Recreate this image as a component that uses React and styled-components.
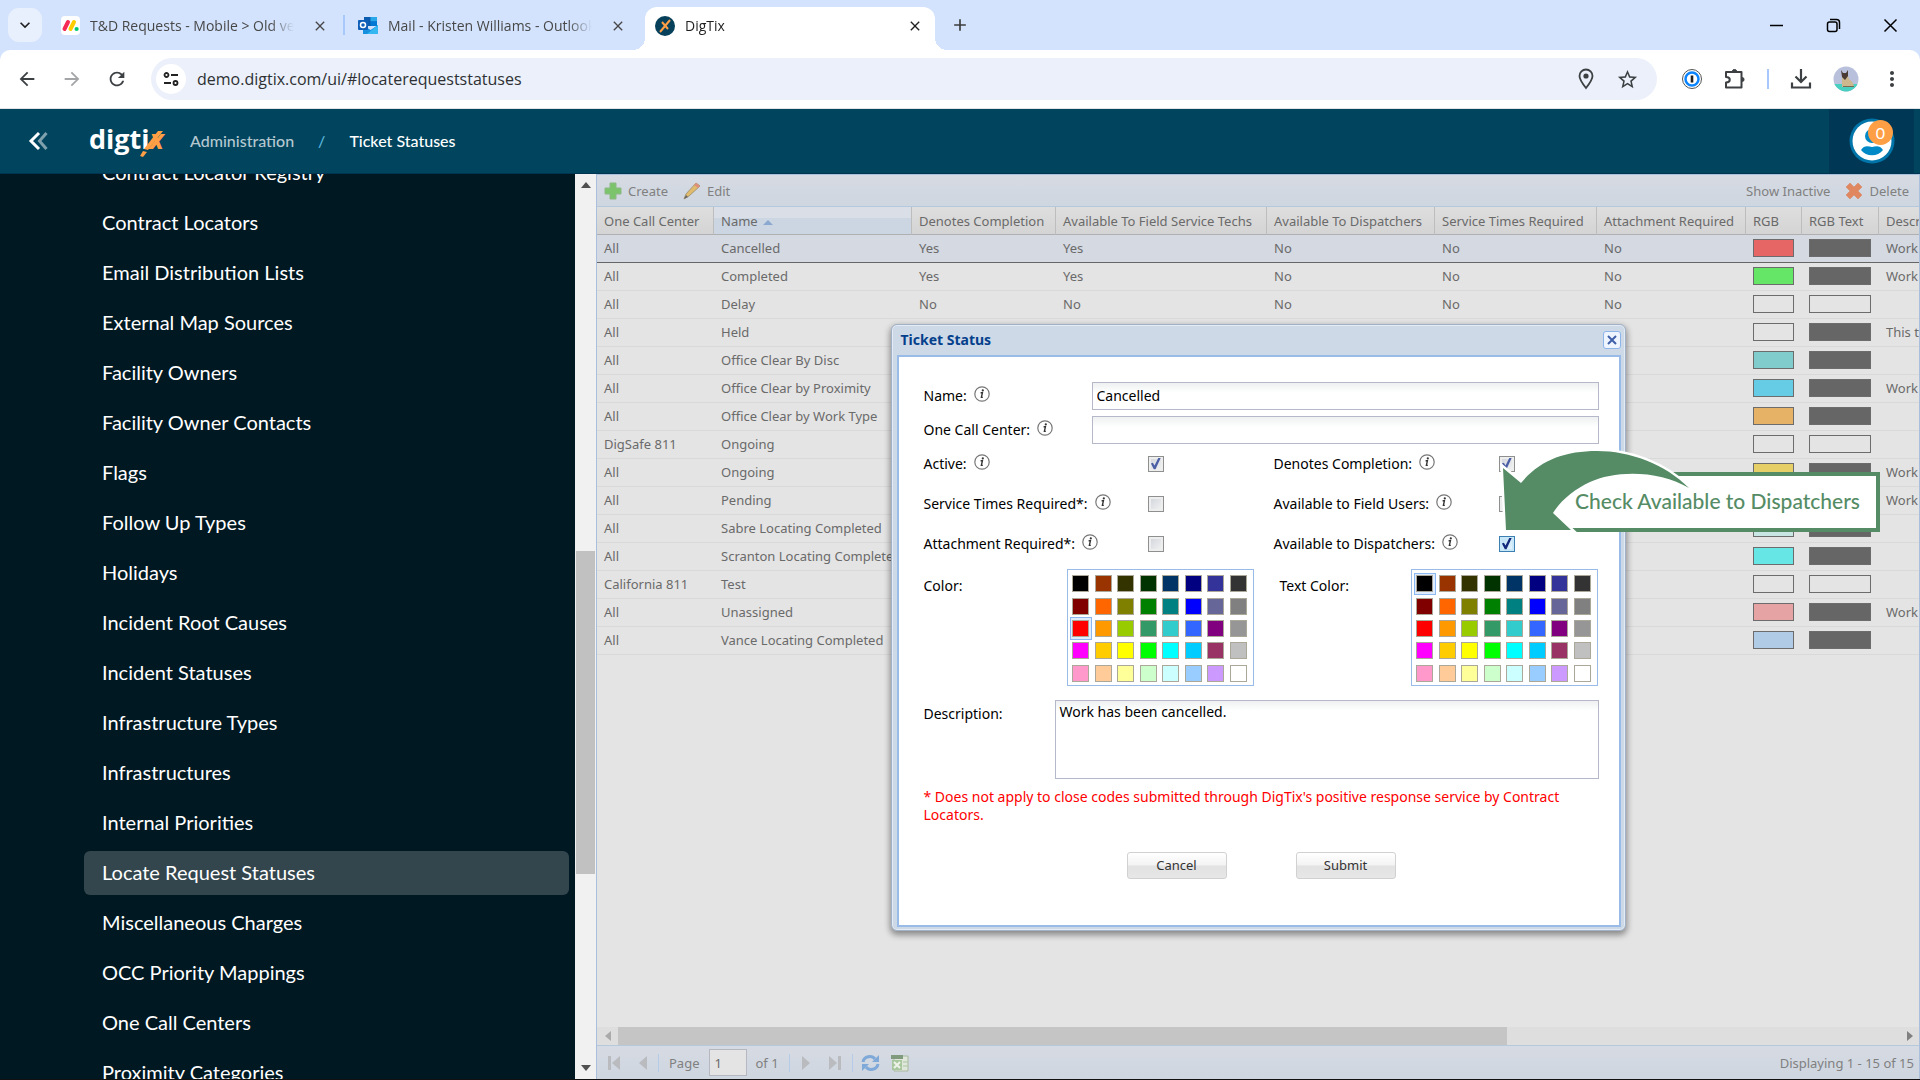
import { useState } from "react";
import styled, { createGlobalStyle } from "styled-components";
import {
  MdArrowBack,
  MdArrowForward,
  MdRefresh,
  MdStarBorder,
  MdMoreVert,
  MdAdd,
  MdClose,
  MdKeyboardArrowDown,
} from "react-icons/md";

const GlobalStyle = createGlobalStyle`
  * { box-sizing: border-box; }
  body {
    margin: 0;
    overflow: hidden;
    font-family: "Noto Sans", sans-serif;
    font-size: 13px;
  }
  button, input, textarea { font: inherit; margin: 0; }
  button { padding: 0; border: 0; background: none; color: inherit; }
  a { color: inherit; text-decoration: none; }
`;

const Page = styled.div`
  display: flex;
  flex-direction: column;
  height: 100vh;
  border-bottom: 1px solid #111;
`;

/* ---------- browser ---------- */

const TabStrip = styled.div`
  display: flex;
  align-items: center;
  height: 50px;
  padding-left: 8px;
  background: #d3e3fd;
  color: #1f1f1f;
  font-family: "Open Sans", sans-serif;
  font-size: 14px;
`;

const TabMenu = styled.button`
  display: flex;
  align-items: center;
  justify-content: center;
  width: 34px;
  height: 34px;
  border-radius: 11px;
  background: #e9f0fd;
  font-size: 20px;
`;

const Tab = styled.div`
  position: relative;
  display: flex;
  align-items: center;
  gap: 10px;
  width: ${(p) => p.$width}px;
  height: 43px;
  margin-top: 7px;
  padding: 0 ${(p) => p.$end}px 6px ${(p) => p.$indent}px;
  color: ${(p) => (p.$active ? "#1f1f1f" : "#474747")};
  background: ${(p) => (p.$active ? "#fff" : "transparent")};
  border-radius: 12px 12px 0 0;

  &::before, &::after {
    content: "";
    display: ${(p) => (p.$active ? "block" : "none")};
    position: absolute;
    bottom: 0;
    width: 12px;
    height: 12px;
  }
  &::before {
    right: 100%;
    background: radial-gradient(circle at 0 0, transparent 12px, #fff 12px);
  }
  &::after {
    left: 100%;
    background: radial-gradient(circle at 100% 0, transparent 12px, #fff 12px);
  }
`;

const TabTitle = styled.span`
  flex: 1;
  margin-right: 4px;
  overflow: hidden;
  white-space: nowrap;
  mask-image: linear-gradient(to right, #000 calc(100% - 24px), transparent);
`;

const TabClose = styled.button`
  display: flex;
  padding: 4px;
  font-size: 16px;
`;

const TabDivider = styled.span`
  width: 2px;
  height: 20px;
  background: #a8c7fa;
`;

const NewTab = styled.button`
  display: flex;
  margin-left: 15px;
  font-size: 20px;
  color: #3c3c3c;
`;

const WindowButtons = styled.div`
  display: flex;
  gap: 42px;
  margin-left: auto;
  padding-right: 22px;

  button { display: flex; }
`;

const AddressRow = styled.div`
  background: #d3e3fd;
`;

const AddressBar = styled.div`
  display: flex;
  align-items: center;
  height: 59px;
  padding: 0 16px;
  background: #fff;
  border-radius: 10px 10px 0 0;
  border-bottom: 1px solid #dfe3e6;
  color: #3c4043;
`;

const NavButton = styled.button`
  display: flex;
  margin-right: 23px;
  font-size: 22px;
  color: ${(p) => (p.$dim ? "#a3a5a7" : "#3c4043")};
`;

const Omnibox = styled.div`
  display: flex;
  align-items: center;
  flex: 1;
  height: 42px;
  padding: 0 18px 0 5px;
  gap: 11px;
  border-radius: 21px;
  background: #ebf0fa;

  button { display: flex; }
`;

const SiteInfo = styled.button`
  align-items: center;
  justify-content: center;
  width: 30px;
  height: 30px;
  border-radius: 50%;
  background: #fff;
`;

const UrlInput = styled.input`
  flex: 1;
  border: 0;
  padding: 0;
  outline: 0;
  background: none;
  color: #2e3033;
  font-family: "Open Sans", sans-serif;
  font-size: 16px;
`;

const PinButton = styled.button`
  margin-right: 9px;
`;

const Extensions = styled.div`
  display: flex;
  align-items: center;
  gap: 21px;
  margin-left: 24px;

  button { display: flex; }
`;

/* ---------- app header ---------- */

const AppHeader = styled.header`
  display: flex;
  align-items: center;
  height: 65px;
  padding: 0 6px 0 28px;
  background: #00445e;
  border-bottom: 1px solid #003450;
  color: #fff;
  font-family: Lato, sans-serif;
  font-size: 16px;
`;

const Collapse = styled.button`
  display: flex;
  margin-right: 41px;
`;

const Logo = styled.a`
  position: relative;
  width: 74px;
  margin-right: 27px;
  padding-bottom: 4px;
  font-family: "Open Sans", sans-serif;
  font-size: 27px;
  font-weight: 700;
  line-height: 36px;
  white-space: nowrap;

  span { color: #ff9f45; font-style: italic; }

  /* long stroke through the x */
  svg { position: absolute; top: 5px; right: 0; }
`;

const Crumbs = styled.nav`
  display: flex;
  gap: 24px;
  padding-bottom: 2px;
  font-weight: 500;
`;

const Crumb = styled.a`
  color: ${(p) => (p.$current ? "#fff" : "#b5c8d0")};
`;

const CrumbSlash = styled.span`
  color: #5cb6dd;
`;

const UserBox = styled.button`
  position: relative;
  display: flex;
  align-items: center;
  justify-content: center;
  width: 85px;
  height: 64px;
  margin-left: auto;
  background: #003755;
`;

const Badge = styled.span`
  position: absolute;
  top: 11px;
  right: 21px;
  width: 25px;
  height: 25px;
  border-radius: 50%;
  background: #ff9f45;
  font-size: 16px;
  line-height: 25px;
  text-align: center;
`;

/* ---------- sidebar ---------- */

const Body = styled.div`
  display: flex;
  flex: 1;
  min-height: 0;
`;

const Sidebar = styled.nav`
  width: 575px;
  flex: none;
  padding: 0 6px 0 84px;
  overflow: hidden;
  background: #001822;
`;

const MenuList = styled.ul`
  display: flex;
  flex-direction: column;
  gap: 6px;
  margin: -23px 0 0;
  padding: 0;
  list-style: none;
`;

const MenuLink = styled.a`
  display: block;
  height: 44px;
  padding-left: 18px;
  border-radius: 6px;
  background: ${(p) => (p.$active ? "#33464e" : "transparent")};
  color: #fff;
  font-family: Lato, sans-serif;
  font-size: 20px;
  line-height: 42px;
`;

const VScroll = styled.div`
  display: flex;
  flex-direction: column;
  align-items: center;
  justify-content: space-between;
  width: 21px;
  flex: none;
  padding: 8px 1px;
  background: #f1f1f1;
`;

const VThumb = styled.div`
  width: 19px;
  height: 323px;
  margin-top: 172px;
  background: #c1c1c1;
`;

const Arrow = styled.span`
  border: 5px solid transparent;
  ${(p) => (p.$dir === "up" ? "border-bottom: 6px solid #505050; border-top: 0;" : "")}
  ${(p) => (p.$dir === "down" ? "border-top: 6px solid #505050; border-bottom: 0;" : "")}
  ${(p) => (p.$dir === "left" ? "border-right: 6px solid #aaa; border-left: 0;" : "")}
  ${(p) => (p.$dir === "right" ? "border-left: 6px solid #808080; border-right: 0;" : "")}
`;

/* ---------- grid ---------- */

const Main = styled.main`
  position: relative;
  display: flex;
  flex-direction: column;
  flex: 1;
  min-width: 0;
  border: 1px solid #a9bfdc;
  border-bottom: 0;
  background: #e4e4e4;
  color: #6a6a6a;
`;

const Toolbar = styled.div`
  display: flex;
  align-items: center;
  height: 32px;
  padding: 0 10px 0 7px;
  background: linear-gradient(#d6dae3, #ced6df);
  border-bottom: 1px solid #b4c8de;
  color: #808080;
`;

const ToolButton = styled.button`
  display: flex;
  align-items: center;
  gap: 6px;
  margin-right: 15px;

  &:last-child { margin-right: 0; }
`;

const Spacer = styled.span`
  flex: 1;
`;

const GridView = styled.div`
  flex: 1;
  overflow: hidden;
`;

const GridTable = styled.table`
  width: 1700px;
  table-layout: fixed;
  border-collapse: separate;
  border-spacing: 0;
`;

const HeadCell = styled.th`
  height: 28px;
  padding: 0 0 0 7px;
  overflow: hidden;
  text-align: left;
  font-weight: 400;
  white-space: nowrap;
  border-right: 1px solid #bdbdbd;
  border-bottom: 1px solid #b0b0b0;
  background: ${(p) =>
    p.$sorted ? "linear-gradient(#d9dee7 40%, #ccd6e3 41%)" : "linear-gradient(#dedede, #d4d4d4)"};
`;

const SortMark = styled.span`
  display: inline-block;
  margin-left: 5px;
  vertical-align: middle;
  border: 5px solid transparent;
  border-top: 0;
  border-bottom: 5px solid #8ba9d0;
`;

const Row = styled.tr`
  background: ${(p) => (p.$selected ? "#d4d9e2" : "#e4e4e4")};

  td { border-bottom: 1px solid ${(p) => (p.$selected ? "#666" : "#d9d9d9")}; }
`;

const Cell = styled.td`
  height: 28px;
  padding: 0 8px 1px 7px;
  overflow: hidden;
  white-space: nowrap;
`;

const Chip = styled.div`
  height: 18px;
  border: 1px solid #6c6c6c;
  background: ${(p) => p.$color || "transparent"};
`;

const HScroll = styled.div`
  display: flex;
  align-items: center;
  height: 18px;
  padding: 0 6px 0 8px;
  background: #dedede;
`;

const HThumb = styled.div`
  width: 68%;
  height: 18px;
  margin: 0 auto 0 7px;
  background: #c5c5c5;
`;

const Pager = styled.div`
  display: flex;
  align-items: center;
  height: 34px;
  padding: 0 5px 0 10px;
  background: linear-gradient(#d6dae3, #ced6df);
  border-top: 1px solid #b4c8de;
  color: #808080;

  button { display: flex; }
`;

const PagerGroup = styled.div`
  display: flex;
  align-items: center;
  gap: ${(p) => p.$gap}px;
  padding: 0 10px 0 ${(p) => p.$start || 8}px;
  border-left: ${(p) => (p.$first ? "0" : "1px solid #b4cbea")};
  height: 18px;
`;

const PageInput = styled.input`
  width: 38px;
  height: 27px;
  padding: 0 5px;
  border: 1px solid #b5b8c0;
  background: #e4e4e4;
  color: #6a6a6a;
`;

/* ---------- dialog ---------- */

const Overlay = styled.div`
  position: absolute;
  inset: 0;
  display: flex;
  align-items: center;
  justify-content: center;
`;

const Dialog = styled.section`
  width: 735px;
  padding: 0 4px 3px 5px;
  border: 1px solid #a2b1c5;
  border-radius: 6px;
  background: #ced9e7;
  box-shadow: 0 3px 6px 1px rgba(0, 0, 0, 0.4), inset 0 0 0 1px #e3ecf6;
  color: #000;
`;

const DialogHead = styled.div`
  display: flex;
  align-items: center;
  justify-content: space-between;
  height: 30px;
  padding: 0 0 0 4px;

  h2 { margin: 0; font-size: 14px; font-weight: 700; color: #04408c; }
`;

const DialogClose = styled.button`
  display: flex;
  align-items: center;
  justify-content: center;
  width: 18px;
  height: 18px;
  border: 1px solid #8fb4e8;
  border-radius: 3px;
  background: #eef5ff;
`;

const Form = styled.form`
  padding: 25px 20px 46px 25px;
  border: 2px solid #99bbe8;
  background: #fff;
  font-size: 14px;
`;

const FieldRow = styled.div`
  display: grid;
  grid-template-columns: 168px 1fr;
  align-items: center;
  margin-bottom: ${(p) => (p.$last ? 0 : 6)}px;
`;

const CheckGrid = styled.div`
  display: grid;
  grid-template-columns: 224px 126px 225px 1fr;
  grid-auto-rows: 40px;
  align-items: center;
`;

const Label = styled.label`
  display: flex;
  align-items: center;
  gap: 7px;

  svg { margin-bottom: 4px; }
`;

const TextInput = styled.input`
  width: 100%;
  height: 28px;
  padding: 0 4px;
  border: 1px solid #b5b8c8;
  background: linear-gradient(#eef0f1, #fff 10px);
`;

const CheckBox = styled.input`
  appearance: none;
  position: relative;
  width: 16px;
  height: 16px;
  border: 1px solid ${(p) => (p.$hot ? "#3c7fb1" : "#8e8f8f")};
  background: ${(p) =>
    p.$hot
      ? "linear-gradient(135deg, #b9dff5, #e8f6fd)"
      : "linear-gradient(135deg, #cfd3da, #f4f4f4)"};
  box-shadow: inset 0 0 0 2px ${(p) => (p.$hot ? "#c8e8f9" : "#eee")};

  &:checked::before {
    content: "";
    position: absolute;
    inset: 1px;
    background: ${(p) => (p.$hot ? "#12297c" : "#4a5fa6")};
    clip-path: polygon(12% 50%, 28% 44%, 42% 66%, 74% 2%, 94% 2%, 50% 98%, 36% 98%);
  }
`;

const ColorRow = styled.div`
  display: grid;
  grid-template-columns: 143px 187px 157px 187px;
  margin-top: 5px;
`;

const PaletteLabel = styled.span`
  padding: 7px 0 0 ${(p) => p.$indent || 0}px;
`;

const Palette = styled.div`
  display: grid;
  grid-template-columns: repeat(8, 1fr);
  grid-template-rows: repeat(5, 1fr);
  width: 187px;
  height: 117px;
  padding: 3px 3px 0 2px;
  border: 1px solid #99bbe8;
`;

const Swatch = styled.button`
  display: flex;
  align-items: center;
  justify-content: center;
  border: 1px solid ${(p) => (p.$on ? "#8bb8f3" : "transparent")};
  background: ${(p) => (p.$on ? "#deecfd" : "transparent")};

  &::before {
    content: "";
    width: 15px;
    height: 15px;
    border: 1px solid #aca899;
    background: ${(p) => p.$color};
  }
`;

const DescRow = styled.div`
  display: grid;
  grid-template-columns: 131px 1fr;
  margin-top: 14px;

  label { padding-top: 4px; }
`;

const TextArea = styled.textarea`
  height: 79px;
  padding: 3px 4px;
  resize: none;
  border: 1px solid #b5b8c8;
  background: linear-gradient(#eef0f1, #fff 10px);
  line-height: 16px;
`;

const Note = styled.p`
  margin: 9px 0 28px;
  color: #f00;
  line-height: 18px;
`;

const Buttons = styled.div`
  display: flex;
  gap: 69px;
  padding-left: 203px;
`;

const FormButton = styled.button`
  width: 100px;
  height: 27px;
  border: 1px solid #d1d1d1;
  border-radius: 3px;
  background: linear-gradient(#fff, #f3f3f3 48%, #e2e2e2 52%, #e7e7e7);
  color: #333;
  font-size: 13px;
`;

/* ---------- callout ---------- */

const Callout = styled.div`
  position: absolute;
  top: 297px;
  right: 39px;
  display: flex;
  align-items: center;
  height: 60px;
  padding: 0 16px 3px 20px;
  border: 4px solid #558c65;
  border-left: 0;
  background: #fff;
  color: #558c65;
  font-family: Lato, sans-serif;
  font-size: 21px;
  font-weight: 500;

  svg { position: absolute; top: -32px; right: 180px; }
  span { position: relative; }
`;

const MENU = [
  "Contract Locator Registry", "Contract Locators", "Email Distribution Lists",
  "External Map Sources", "Facility Owners", "Facility Owner Contacts", "Flags",
  "Follow Up Types", "Holidays", "Incident Root Causes", "Incident Statuses",
  "Infrastructure Types", "Infrastructures", "Internal Priorities",
  "Locate Request Statuses", "Miscellaneous Charges", "OCC Priority Mappings",
  "One Call Centers", "Proximity Categories",
];

const COLUMNS = [
  ["One Call Center", 117], ["Name", 198], ["Denotes Completion", 144],
  ["Available To Field Service Techs", 211], ["Available To Dispatchers", 168],
  ["Service Times Required", 162], ["Attachment Required", 149], ["RGB", 56],
  ["RGB Text", 77], ["Description", 418],
];

const DARK = "#666";

// center, name, completion, field techs, rgb, rgb text, description
const ROWS = [
  ["All", "Cancelled", "Yes", "Yes", "#e66666", DARK, "Work has been cancelled."],
  ["All", "Completed", "Yes", "Yes", "#66e666", DARK, "Work has been completed."],
  ["All", "Delay", "No", "No", "", "", ""],
  ["All", "Held", "No", "No", "", DARK, "This ticket is on hold."],
  ["All", "Office Clear By Disc", "No", "No", "#80cccc", DARK, ""],
  ["All", "Office Clear by Proximity", "No", "No", "#66cce6", DARK, "Work is clear."],
  ["All", "Office Clear by Work Type", "No", "No", "#e6b366", DARK, ""],
  ["DigSafe 811", "Ongoing", "No", "No", "", "", ""],
  ["All", "Ongoing", "No", "No", "#e6cf66", DARK, "Work is ongoing."],
  ["All", "Pending", "No", "No", "#e6e6b3", DARK, "Work is pending."],
  ["All", "Sabre Locating Completed", "No", "No", "#c8e6e3", DARK, ""],
  ["All", "Scranton Locating Completed", "No", "No", "#66e6e4", DARK, ""],
  ["California 811", "Test", "No", "No", "", "", ""],
  ["All", "Unassigned", "No", "No", "#e6a3a3", DARK, "Work is unassigned."],
  ["All", "Vance Locating Completed", "No", "No", "#b0cbe6", DARK, ""],
];

const COLORS = [
  "#000000", "#993300", "#333300", "#003300", "#003366", "#000080", "#333399", "#333333",
  "#800000", "#ff6600", "#808000", "#008000", "#008080", "#0000ff", "#666699", "#808080",
  "#ff0000", "#ff9900", "#99cc00", "#339966", "#33cccc", "#3366ff", "#800080", "#969696",
  "#ff00ff", "#ffcc00", "#ffff00", "#00ff00", "#00ffff", "#00ccff", "#993366", "#c0c0c0",
  "#ff99cc", "#ffcc99", "#ffff99", "#ccffcc", "#ccffff", "#99ccff", "#cc99ff", "#ffffff",
];

const CHECKS = [
  ["active", "Active:", true],
  ["completion", "Denotes Completion:", true],
  ["times", "Service Times Required*:", false],
  ["field", "Available to Field Users:", false],
  ["attachment", "Attachment Required*:", false],
  ["dispatchers", "Available to Dispatchers:", true],
];

function InfoIcon() {
  return (
    <svg width="16" height="16" viewBox="0 0 16 16" fill="none">
      <circle cx="8" cy="8" r="7.2" stroke="#777" strokeWidth="1.2" />
      <circle cx="8.8" cy="4.4" r="1.1" fill="#333" />
      <path d="M6.6 6.8h1.8l-1 4.6h1.4" stroke="#333" strokeWidth="1.4" />
    </svg>
  );
}

function MondayIcon() {
  return (
    <svg width="19" height="19" viewBox="0 0 19 19">
      <rect width="19" height="19" rx="4" fill="#fff" />
      <g strokeWidth="4" strokeLinecap="round">
        <path d="M3.5 13 7 6" stroke="#f62b54" />
        <path d="M9.5 13 13 6" stroke="#fc0" />
      </g>
      <circle cx="15.6" cy="13" r="2.1" fill="#00ca72" />
    </svg>
  );
}

function OutlookIcon() {
  return (
    <svg width="20" height="19" viewBox="0 0 20 19">
      <path d="M6 1h13v9H6z" fill="#0a5cb0" />
      <path d="M12.500 1H19v4.500h-6.500z" fill="#28a8ea" />
      <path d="M12.500 5.500H19V10h-6.500z" fill="#0078d4" />
      <path d="M5 9l7.500 5L20 9v9H5z" fill="#1490df" />
      <path d="M20 9v9H9z" fill="#35b8f1" />
      <rect y="4" width="10" height="10" rx="1" fill="#0f5fb8" />
      <circle cx="5" cy="9" r="2.500" fill="none" stroke="#fff" strokeWidth="1.500" />
    </svg>
  );
}

function DigTixIcon() {
  return (
    <svg width="20" height="20" viewBox="0 0 20 20">
      <circle cx="10" cy="10" r="10" fill="#06405a" />
      <path d="M5 16 15 4" stroke="#ff9f45" strokeWidth="2" />
      <path d="M7 6l6 7" stroke="#ff9f45" strokeWidth="2" />
    </svg>
  );
}

function Browser() {
  return (
    <>
      <TabStrip>
        <TabMenu aria-label="Search tabs"><MdKeyboardArrowDown /></TabMenu>
        <Tab $width={301} $indent={19} $end={11}>
          <MondayIcon />
          <TabTitle>T&amp;D Requests - Mobile &gt; Old version</TabTitle>
          <TabClose aria-label="Close tab"><MdClose /></TabClose>
        </Tab>
        <TabDivider />
        <Tab $width={300} $indent={13} $end={15}>
          <OutlookIcon />
          <TabTitle>Mail - Kristen Williams - Outlook</TabTitle>
          <TabClose aria-label="Close tab"><MdClose /></TabClose>
        </Tab>
        <Tab $width={290} $indent={10} $end={8} $active>
          <DigTixIcon />
          <TabTitle>DigTix</TabTitle>
          <TabClose aria-label="Close tab"><MdClose /></TabClose>
        </Tab>
        <NewTab aria-label="New tab"><MdAdd /></NewTab>
        <WindowButtons>
          <button aria-label="Minimize">
            <svg width="15" height="15"><path d="M1 7.500h13" stroke="#000" strokeWidth="1.500" /></svg>
          </button>
          <button aria-label="Restore">
            <svg width="15" height="15" fill="none" stroke="#000" strokeWidth="1.500">
              <rect x="1.500" y="4" width="9.500" height="9.500" rx="2" />
              <path d="M4 1.500h6.500a3 3 0 0 1 3 3V11" />
            </svg>
          </button>
          <button aria-label="Close">
            <svg width="15" height="15"><path d="m1.500 1.500 12 12m0-12-12 12" stroke="#000" strokeWidth="1.500" /></svg>
          </button>
        </WindowButtons>
      </TabStrip>
      <AddressRow>
        <AddressBar>
          <NavButton aria-label="Back"><MdArrowBack /></NavButton>
          <NavButton aria-label="Forward" $dim><MdArrowForward /></NavButton>
          <NavButton aria-label="Reload"><MdRefresh /></NavButton>
          <Omnibox>
            <SiteInfo aria-label="Site information">
              <svg width="16" height="16" fill="none" stroke="#222" strokeWidth="1.800">
                <circle cx="3.500" cy="4" r="2" />
                <path d="M8 4h7M1 12h7" />
                <circle cx="12.500" cy="12" r="2" />
              </svg>
            </SiteInfo>
            <UrlInput aria-label="Address" defaultValue="demo.digtix.com/ui/#locaterequeststatuses" />
            <PinButton aria-label="Location">
              <svg width="20" height="22" viewBox="0 0 20 22" fill="none">
                <path d="M10 20C6 15 3.500 11.500 3.500 8a6.500 6.500 0 0 1 13 0c0 3.500-2.500 7-6.500 12z" stroke="#3c4043" strokeWidth="1.800" />
                <circle cx="10" cy="8" r="2.600" fill="#3c4043" />
              </svg>
            </PinButton>
            <button aria-label="Bookmark"><MdStarBorder size={23} /></button>
          </Omnibox>
          <Extensions>
            <button aria-label="Password manager">
              <svg width="22" height="22" viewBox="0 0 22 22">
                <circle cx="11" cy="11" r="9.500" fill="#fff" stroke="#555" />
                <circle cx="11" cy="11" r="6.500" fill="#fff" stroke="#0a84ff" strokeWidth="2.500" />
                <path d="M11 7.500v7" stroke="#1f1f1f" strokeWidth="2.600" />
              </svg>
            </button>
            <button aria-label="Extensions">
              <svg width="22" height="22" viewBox="0 0 22 22" fill="none" stroke="#3c4043" strokeWidth="2">
                <path d="M2 4h15.500v15.500H2v-5c5 0 5-5.500 0-5.500z" strokeLinejoin="round" />
                <path d="M8.500 3a2 1.500 0 0 1 4 0zM18.500 9.500a1.500 2 0 0 1 0 4z" fill="#3c4043" strokeWidth="1" />
              </svg>
            </button>
            <TabDivider />
            <button aria-label="Downloads">
              <svg width="22" height="22" viewBox="0 0 22 22" fill="none" stroke="#3c4043" strokeWidth="2.200">
                <path d="M11 1v13M5.500 8.500 11 14l5.500-5.500M2 14.500v5h18v-5" />
              </svg>
            </button>
            <button aria-label="Profile">
              <svg width="26" height="26" viewBox="0 0 26 26">
                <clipPath id="avatar"><circle cx="13" cy="13" r="12.500" /></clipPath>
                <g clipPath="url(#avatar)">
                  <rect width="26" height="26" fill="#b9c0dc" />
                  <path d="M0 18h26v8H0z" fill="#48cfc0" />
                  <path d="M9 10c1-2 5-2 6 0l1 3c3 2 5 5 5 8H9z" fill="#cdb78f" />
                  <path d="M8 4l2 3h3l2-3v6l-3 4-3-3z" fill="#4a3a34" />
                  <path d="M10 20h11v1H10z" fill="#7b6a52" />
                </g>
              </svg>
            </button>
            <button aria-label="Menu"><MdMoreVert size={24} /></button>
          </Extensions>
        </AddressBar>
      </AddressRow>
    </>
  );
}

function Header() {
  return (
    <AppHeader>
      <Collapse aria-label="Collapse menu">
        <svg width="20" height="20" viewBox="0 0 20 20" fill="none" strokeWidth="3">
          <path d="M18.500 2l-7 8 7 8" stroke="#7fa1ae" />
          <path d="M11 2l-8 8 8 8" stroke="#fff" />
        </svg>
      </Collapse>
      <Logo href="#home">
        digti<span>x</span>
        <svg width="24" height="32" viewBox="0 0 24 32">
          <path d="M19 5h5L9 24l-4-1z" fill="#ff9f45" />
          <path d="M4 25l4 1-4 5-3-1z" fill="#ff9f45" />
        </svg>
      </Logo>
      <Crumbs>
        <Crumb href="#administration">Administration</Crumb>
        <CrumbSlash>/</CrumbSlash>
        <Crumb href="#locaterequeststatuses" $current>Ticket Statuses</Crumb>
      </Crumbs>
      <UserBox aria-label="Account">
        <svg width="46" height="46" viewBox="0 0 46 46">
          <circle cx="23" cy="23" r="22.500" fill="#0075a9" />
          <circle cx="23" cy="23" r="19.500" fill="#fff" />
          <circle cx="23" cy="18" r="7" fill="#0089c7" />
          <path d="M12 32c3-5 7-4 11-3 4-1 8-2 11 3-5 7-17 7-22 0z" fill="#0089c7" />
        </svg>
        <Badge>0</Badge>
      </UserBox>
    </AppHeader>
  );
}

function TicketGrid() {
  return (
    <GridView>
      <GridTable>
        <colgroup>
          {COLUMNS.map(([name, width]) => <col key={name} width={width} />)}
        </colgroup>
        <thead>
          <tr>
            {COLUMNS.map(([name]) => (
              <HeadCell key={name} $sorted={name === "Name"}>
                {name}
                {name === "Name" && <SortMark />}
              </HeadCell>
            ))}
          </tr>
        </thead>
        <tbody>
          {ROWS.map(([center, name, done, techs, rgb, text, desc], i) => (
            <Row key={i} $selected={i === 0}>
              <Cell>{center}</Cell>
              <Cell>{name}</Cell>
              <Cell>{done}</Cell>
              <Cell>{techs}</Cell>
              <Cell>No</Cell>
              <Cell>No</Cell>
              <Cell>No</Cell>
              <Cell><Chip $color={rgb} /></Cell>
              <Cell><Chip $color={text} /></Cell>
              <Cell>{desc}</Cell>
            </Row>
          ))}
        </tbody>
      </GridTable>
    </GridView>
  );
}

function ColorPalette({ label, initial }) {
  const [picked, setPicked] = useState(initial);
  return (
    <Palette role="group" aria-label={label}>
      {COLORS.map((c) => (
        <Swatch key={c} type="button" aria-label={c} $color={c} $on={c === picked} onClick={() => setPicked(c)} />
      ))}
    </Palette>
  );
}

function StatusDialog() {
  return (
    <Dialog role="dialog" aria-labelledby="dialog-title">
      <DialogHead>
        <h2 id="dialog-title">Ticket Status</h2>
        <DialogClose aria-label="Close">
          <svg width="10" height="10"><path d="m1 1 8 8m0-8-8 8" stroke="#3f5fa8" strokeWidth="2" /></svg>
        </DialogClose>
      </DialogHead>
      <Form onSubmit={(e) => e.preventDefault()}>
        <FieldRow>
          <Label htmlFor="name">Name: <InfoIcon /></Label>
          <TextInput id="name" defaultValue="Cancelled" />
        </FieldRow>
        <FieldRow $last>
          <Label htmlFor="center">One Call Center: <InfoIcon /></Label>
          <TextInput id="center" />
        </FieldRow>
        <CheckGrid>
          {CHECKS.map(([id, label, on]) => [
            <Label key={id} htmlFor={id}>{label} <InfoIcon /></Label>,
            <CheckBox key={id + "-box"} id={id} type="checkbox" defaultChecked={on} $hot={id === "dispatchers"} />,
          ])}
        </CheckGrid>
        <ColorRow>
          <PaletteLabel>Color:</PaletteLabel>
          <ColorPalette label="Color" initial="#ff0000" />
          <PaletteLabel $indent={26}>Text Color:</PaletteLabel>
          <ColorPalette label="Text Color" initial="#000000" />
        </ColorRow>
        <DescRow>
          <label htmlFor="description">Description:</label>
          <TextArea id="description" defaultValue="Work has been cancelled." />
        </DescRow>
        <Note>
          * Does not apply to close codes submitted through DigTix's positive response service by Contract Locators.
        </Note>
        <Buttons>
          <FormButton type="button">Cancel</FormButton>
          <FormButton type="submit">Submit</FormButton>
        </Buttons>
      </Form>
    </Dialog>
  );
}

function PagerBar() {
  return (
    <Pager>
      <PagerGroup $first $gap={18} $start={1}>
        <button aria-label="First page">
          <svg width="13" height="14" fill="#b9bbbf"><path d="M0 0h3v14H0zM12 0v14L4 7z" /></svg>
        </button>
        <button aria-label="Previous page">
          <svg width="9" height="14" fill="#b9bbbf"><path d="M8 0v14L0 7z" /></svg>
        </button>
      </PagerGroup>
      <PagerGroup $gap={9} $start={10}>
        <label htmlFor="page">Page</label>
        <PageInput id="page" defaultValue="1" />
        <span>of 1</span>
      </PagerGroup>
      <PagerGroup $gap={18} $start={12}>
        <button aria-label="Next page">
          <svg width="9" height="14" fill="#b9bbbf"><path d="M0 0v14l8-7z" /></svg>
        </button>
        <button aria-label="Last page">
          <svg width="13" height="14" fill="#b9bbbf"><path d="M0 0v14l8-7zM9 0h3v14H9z" /></svg>
        </button>
      </PagerGroup>
      <PagerGroup $gap={11}>
        <button aria-label="Refresh">
          <svg width="19" height="18" viewBox="0 0 19 18" fill="none" stroke="#7fa9d8" strokeWidth="3">
            <path d="M2 8c1-6 9-7 12-3" />
            <path d="M18 1v7h-7z" fill="#7fa9d8" stroke="none" />
            <path d="M17 10c-1 6-9 7-12 3" />
            <path d="M1 17v-7h7z" fill="#7fa9d8" stroke="none" />
          </svg>
        </button>
        <button aria-label="Export to Excel">
          <svg width="18" height="18" viewBox="0 0 18 18">
            <path d="M3 2h14v15H3z" fill="#dfe6da" stroke="#a8b8a0" />
            <path d="M0 1h12v4H0z" fill="#7f9a7c" />
            <path d="M1 6h10v10H1z" fill="#a9c79e" />
            <path d="m3 8 6 6m0-6-6 6" stroke="#eef3ea" strokeWidth="2" />
            <path d="M12 8h5m-5 4h5" stroke="#a9c79e" />
          </svg>
        </button>
      </PagerGroup>
      <Spacer />
      <span>Displaying 1 - 15 of 15</span>
    </Pager>
  );
}

function App() {
  return (
    <Page>
      <GlobalStyle />
      <Browser />
      <Header />
      <Body>
        <Sidebar>
          <MenuList>
            {MENU.map((item) => (
              <li key={item}>
                <MenuLink href="#menu" $active={item === "Locate Request Statuses"}>{item}</MenuLink>
              </li>
            ))}
          </MenuList>
        </Sidebar>
        <VScroll>
          <Arrow $dir="up" />
          <VThumb />
          <Arrow $dir="down" />
        </VScroll>
        <Main>
          <Toolbar>
            <ToolButton>
              <svg width="18" height="18"><path d="M6 1h6v5h5v6h-5v5H6v-5H1V6h5z" fill="#7cc46c" stroke="#8db884" /></svg>
              Create
            </ToolButton>
            <ToolButton>
              <svg width="18" height="18">
                <path d="M1 17l2-5L13 1l4 3L6 14z" fill="#e0bb6c" stroke="#a89878" />
                <path d="M13 1l4 3-2 2-4-3z" fill="#df8f7c" />
                <path d="M1 17l2-4 2 2z" fill="#666" />
              </svg>
              Edit
            </ToolButton>
            <Spacer />
            <ToolButton>Show Inactive</ToolButton>
            <ToolButton>
              <svg width="18" height="18"><path d="M5 1l4 4 4-4 4 4-4 4 4 4-4 4-4-4-4 4-4-4 4-4-4-4z" fill="#e0875f" stroke="#d59a80" /></svg>
              Delete
            </ToolButton>
          </Toolbar>
          <TicketGrid />
          <HScroll>
            <Arrow $dir="left" />
            <HThumb />
            <Arrow $dir="right" />
          </HScroll>
          <PagerBar />
          <Overlay>
            <StatusDialog />
          </Overlay>
          <Callout>
            <svg width="196" height="92" viewBox="1500 444 196 92">
              <path
                d="M1503 468L1521 483C1540 460 1565 451 1597 451C1630 451 1665 464 1689 488C1660 470 1615 470 1590 482C1575 489 1561 500 1553 513L1571 530L1506 530Z"
                fill="#558c65"
                stroke="#fff"
                strokeWidth="5"
                paintOrder="stroke"
              />
            </svg>
            <span>Check Available to Dispatchers</span>
          </Callout>
        </Main>
      </Body>
    </Page>
  );
}

export default App;
